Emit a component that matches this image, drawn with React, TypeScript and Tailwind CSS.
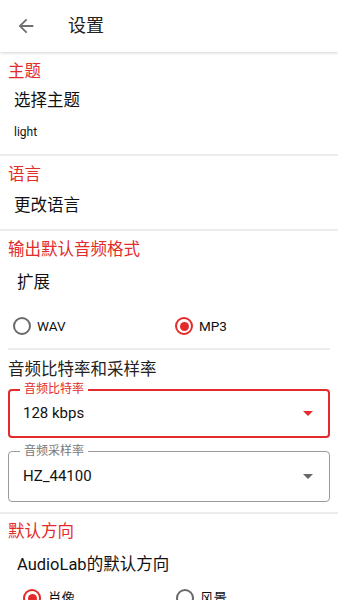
import React from 'react'

const RED = '#e32b2b'

function Radio({ checked }: { checked?: boolean }) {
  return checked ? (
    <span className="flex h-[18px] w-[18px] items-center justify-center rounded-full border-2 border-[#e32b2b]">
      <span className="h-[9px] w-[9px] rounded-full bg-[#e32b2b]" />
    </span>
  ) : (
    <span className="h-[18px] w-[18px] rounded-full border-2 border-[#6b6b6b]" />
  )
}

function Caret({ color }: { color: string }) {
  return (
    <svg width="10" height="5" viewBox="0 0 10 5">
      <path d="M0 0H10L5 5Z" fill={color} />
    </svg>
  )
}

function Divider() {
  return <div className="h-[2px] bg-[#ececec]" />
}

export default function App() {
  return (
    <div
      className="relative h-[600px] w-[338px] overflow-hidden bg-white text-[#111]"
      style={{ fontFamily: 'Roboto, "Noto Sans CJK SC", sans-serif' }}
    >
      {/* toolbar */}
      <div className="relative z-10 flex h-[52px] items-center bg-white shadow-[0_1px_3px_rgba(0,0,0,0.18)]">
        <svg className="ml-[15px]" width="22" height="22" viewBox="0 0 24 24">
          <path
            d="M20 11H7.83l5.59-5.59L12 4l-8 8 8 8 1.41-1.41L7.83 13H20v-2z"
            fill="#6f6f6f"
          />
        </svg>
        <span className="ml-[31px] text-[18px] leading-[22px] text-[#222]">设置</span>
      </div>

      {/* theme */}
      <div className="px-2 pt-[10px] pb-[14px]">
        <div className="text-[16.5px] leading-[20px] text-[#e32b2b]">主题</div>
        <div className="mt-[9px] pl-[6px] text-[16.5px] leading-[20px]">选择主题</div>
        <div className="mt-[13px] pl-[6px] text-[12px] leading-[16px]">light</div>
      </div>
      <Divider />

      {/* language */}
      <div className="px-2 pt-[9px] pb-[13px]">
        <div className="text-[16.5px] leading-[20px] text-[#e32b2b]">语言</div>
        <div className="mt-[11px] pl-[6px] text-[16.5px] leading-[20px]">更改语言</div>
      </div>
      <Divider />

      {/* output format */}
      <div className="px-2 pt-[9px]">
        <div className="text-[16.5px] leading-[20px] text-[#e32b2b]">输出默认音频格式</div>
        <div className="mt-[13px] pl-[9px] text-[16.5px] leading-[20px]">扩展</div>
        <div className="mt-[21px] grid h-[24px] grid-cols-2 items-center">
          <div className="flex items-center gap-[6px] pl-[5px]">
            <Radio />
            <span className="text-[13.5px]">WAV</span>
          </div>
          <div className="flex items-center gap-[6px] pl-[6px]">
            <Radio checked />
            <span className="text-[13.5px]">MP3</span>
          </div>
        </div>
        <div className="mt-[10px] h-[2px] bg-[#ececec]" />

        <div className="mt-[10px] text-[16.5px] leading-[20px] text-[#222]">音频比特率和采样率</div>

        <div className="relative mt-[9px] flex h-[49px] items-center justify-between rounded-[4px] border-2 border-[#e32b2b] pl-[13px] pr-[15px]">
          <span className="absolute -top-[9px] left-[10px] bg-white px-[4px] text-[12px] leading-[15px] text-[#e32b2b]">
            音频比特率
          </span>
          <span className="text-[15px]">128 kbps</span>
          <Caret color={RED} />
        </div>

        <div className="relative mt-[13px] flex h-[51px] items-center justify-between rounded-[4px] border border-[#9a9a9a] pl-[14px] pr-[16px]">
          <span className="absolute -top-[8px] left-[11px] bg-white px-[4px] text-[12px] leading-[15px] text-[#777]">
            音频采样率
          </span>
          <span className="text-[15px]">HZ_44100</span>
          <Caret color="#666" />
        </div>
      </div>
      <div className="mt-[10px]" />
      <Divider />

      {/* orientation */}
      <div className="px-2 pt-[8px]">
        <div className="text-[16.5px] leading-[20px] text-[#e32b2b]">默认方向</div>
        <div className="mt-[13px] pl-[9px] text-[16.5px] leading-[20px]">AudioLab的默认方向</div>
        <div className="mt-[11px] grid h-[24px] grid-cols-2 items-center">
          <div className="flex items-center gap-[7px] pl-[15px]">
            <Radio checked />
            <span className="text-[13.5px]">肖像</span>
          </div>
          <div className="flex items-center gap-[6px] pl-[7px]">
            <Radio />
            <span className="text-[13.5px]">风景</span>
          </div>
        </div>
      </div>
    </div>
  )
}
